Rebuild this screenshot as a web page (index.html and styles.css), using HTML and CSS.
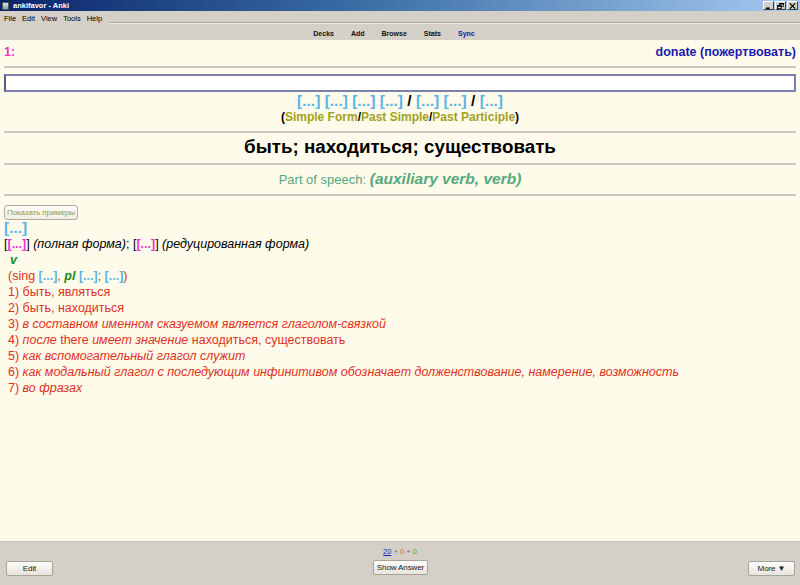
FILE: index.html
```html
<!DOCTYPE html>
<html>
<head>
<meta charset="utf-8">
<link rel="stylesheet" href="styles.css">
</head>
<body>
<div class="window">
  <div class="titlebar">
    <div class="title-left">
      <span class="app-icon"></span>
      <span class="title-text">ankifavor - Anki</span>
    </div>
    <div class="wctrls">
      <span class="wbtn"><svg width="9" height="8" viewBox="0 0 9 8"><rect x="1" y="6" width="5" height="2" fill="#000"/></svg></span>
      <span class="wbtn"><svg width="9" height="8" viewBox="0 0 9 8"><rect x="3.5" y="0.5" width="5" height="4" fill="none" stroke="#000"/><rect x="3" y="0" width="6" height="2" fill="#000"/><rect x="0.5" y="3.5" width="5" height="4" fill="#d4d0c8" stroke="#000"/><rect x="0" y="3" width="6" height="2" fill="#000"/></svg></span>
      <span class="wbtn"><svg width="9" height="8" viewBox="0 0 9 8"><path d="M1 0.5 L8 7.5 M8 0.5 L1 7.5" stroke="#000" stroke-width="1.6"/></svg></span>
    </div>
  </div>
  <div class="menubar">
    <span>File</span><span>Edit</span><span>View</span><span>Tools</span><span>Help</span>
    <span class="menu-line"></span>
  </div>
  <div class="toolbar">
    <span>Decks</span><span>Add</span><span>Browse</span><span>Stats</span><span class="sync">Sync</span>
  </div>
  <div class="content">
    <div class="head-row">
      <span class="num">1:</span>
      <span class="donate">donate (пожертвовать)</span>
    </div>
    <div class="rule"></div>
    <div class="answer-box"></div>
    <div class="forms"><span class="cl">[...]</span> <span class="cl">[...]</span> <span class="cl">[...]</span> <span class="cl">[...]</span> / <span class="cl">[...]</span> <span class="cl">[...]</span> / <span class="cl">[...]</span></div>
    <div class="form-names">(<span class="ol">Simple Form</span>/<span class="ol">Past Simple</span>/<span class="ol">Past Participle</span>)</div>
    <div class="rule r2"></div>
    <div class="word">быть; находиться; существовать</div>
    <div class="rule r3"></div>
    <div class="pos">Part of speech: <b><i>(auxiliary verb, verb)</i></b></div>
    <div class="rule r4"></div>
    <div class="examples"><span class="ex-btn">Показать примеры</span></div>
    <div class="line cl big">[...]</div>
    <div class="line">[<span class="mg">[...]</span>] <i>(полная форма)</i>; [<span class="mg">[...]</span>] <i>(редуцированная форма)</i></div>
    <div class="line ind1 gr">v</div>
    <div class="line red ind2">(sing <span class="cl">[...]</span>, <b class="grn"><i>pl</i></b> <span class="cl">[...]</span>; <span class="cl">[...]</span>)</div>
    <div class="line red ind2">1) быть, являться</div>
    <div class="line red ind2">2) быть, находиться</div>
    <div class="line red ind2">3) <i>в составном именном сказуемом является глаголом-связкой</i></div>
    <div class="line red ind2">4) <i>после</i> there <i>имеет значение</i> находиться, существовать</div>
    <div class="line red ind2">5) <i>как вспомогательный глагол служит</i></div>
    <div class="line red ind2">6) <i>как модальный глагол с последующим инфинитивом обозначает долженствование, намерение, возможность</i></div>
    <div class="line red ind2">7) <i>во фразах</i></div>
  </div>
  <div class="bottombar">
    <div class="counts"><u class="c-new">20</u> + <span class="c-lrn">0</span> + <span class="c-rev">0</span></div>
    <div class="btn-row">
      <span class="btn edit">Edit</span>
      <span class="btn show">Show Answer</span>
      <span class="btn more">More ▼</span>
    </div>
  </div>
</div>
</body>
</html>
```
FILE: styles.css
```css
html, body { margin: 0; padding: 0; }
body { width: 800px; height: 585px; overflow: hidden; font-family: "Liberation Sans", Arial, sans-serif; }
.window { display: flex; flex-direction: column; height: 585px; background: #d4d0c8; }

.titlebar { height: 11px; display: flex; justify-content: space-between; align-items: center;
  background: linear-gradient(to right, #0a246a 0%, #3a6ea5 45%, #a6caf0 100%); }
.title-left { display: flex; align-items: center; gap: 4px; padding-left: 2px; }
.app-icon { width: 7px; height: 8px; background: linear-gradient(#dfe6f0, #8a9ab8); border: 1px solid #555; box-sizing: border-box; }
.title-text { color: #fff; font-weight: bold; font-size: 7.5px; line-height: 11px; }
.wctrls { display: flex; gap: 1px; padding-right: 2px; }
.wbtn { width: 11px; height: 9px; background: #d4d0c8; display: flex; align-items: center; justify-content: center;
  border: 1px solid; border-color: #fff #404040 #404040 #fff; box-sizing: border-box; }
.wbtn svg { width: 7px; height: 6px; }

.menubar { height: 13px; display: flex; align-items: center; font-size: 7.5px; color: #000; padding-left: 4px; gap: 6px; }
.menubar span { line-height: 13px; padding-top: 1px; }
.menu-line { flex: 1; height: 0; border-top: 1px solid #a8a49c; border-bottom: 1px solid #ece9e2; align-self: flex-end; margin-left: 2px; padding: 0 !important; }

.toolbar { height: 16px; display: flex; justify-content: center; align-items: center; font-size: 7px; font-weight: bold; color: #111; padding-right: 12px; padding-top: 2px; box-sizing: border-box; }
.toolbar span { padding: 0 8.5px; }
.toolbar .sync { color: #1a1aaa; }

.content { flex: 1; background: #fffbea; padding: 4px 4px 0 4px; font-size: 12.5px; color: #000; overflow: hidden; }
.head-row { display: flex; justify-content: space-between; font-weight: bold; font-size: 12.5px; line-height: 15px; margin-top: 1px; }
.num { color: #f030d0; }
.donate { color: #1a1aaa; }
.rule { border-top: 2px solid #cac7bf; margin-top: 6px; }
.answer-box { height: 14px; margin-top: 6px; border: 2px solid #7f7fae; border-left-color: #5a5a8a; background: #fff; }
.forms { text-align: center; font-weight: bold; font-size: 15.5px; line-height: 16px; margin-top: 1px; }
.cl { color: #5ab4ea; font-weight: bold; }
.form-names { text-align: center; font-weight: bold; font-size: 12px; line-height: 16px; }
.ol { color: #a1a11e; }
.r2 { margin-top: 6px; }
.word { text-align: center; font-weight: bold; font-size: 18.8px; line-height: 24px; margin-top: 2px; }
.r3 { margin-top: 4px; }
.pos { text-align: center; color: #56a87e; font-size: 13px; line-height: 20px; margin-top: 4px; }
.pos b { font-size: 15.5px; }
.r4 { margin-top: 4px; }
.examples { margin-top: 8px; height: 15px; }
.ex-btn { display: inline-block; box-sizing: border-box; height: 15px; width: 74px; border: 1px solid #b0ad9f; border-radius: 3px;
  background: linear-gradient(#fdfcf6, #f0eee4); font-size: 8px; line-height: 13px; color: #9c9a3a; text-align: center; white-space: nowrap; letter-spacing: -0.1px; }
.line { line-height: 16px; font-size: 12.5px; }
.big { font-size: 15.5px; margin-top: 1px; }
.mg { color: #f030d0; font-weight: bold; }
.ind1 { padding-left: 6px; }
.ind2 { padding-left: 4px; }
.gr { color: #1a8a1a; font-weight: bold; font-style: italic; }
.grn { color: #1a8a1a; }
.red { color: #e0301c; }

.bottombar { height: 44px; border-top: 1px solid #c8c4bc; box-sizing: border-box; display: flex; flex-direction: column; }
.counts { text-align: center; font-size: 7.5px; line-height: 10px; margin-top: 5px; color: #777; }
.c-new { color: #2020a8; }
.c-lrn { color: #d0703a; }
.c-rev { color: #40b040; }
.btn-row { display: flex; justify-content: space-between; align-items: flex-start; padding: 0 5px 0 6px; margin-top: 3px; }
.btn { box-sizing: border-box; height: 15px; border: 1px solid #a8a498; border-radius: 2px; background: linear-gradient(#fcfcfa, #e6e4de);
  font-size: 8px; line-height: 13px; text-align: center; color: #222; white-space: nowrap; letter-spacing: -0.1px; }
.edit { width: 47px; margin-top: 1px; }
.show { width: 55px; }
.more { width: 47px; margin-top: 1px; }
```
